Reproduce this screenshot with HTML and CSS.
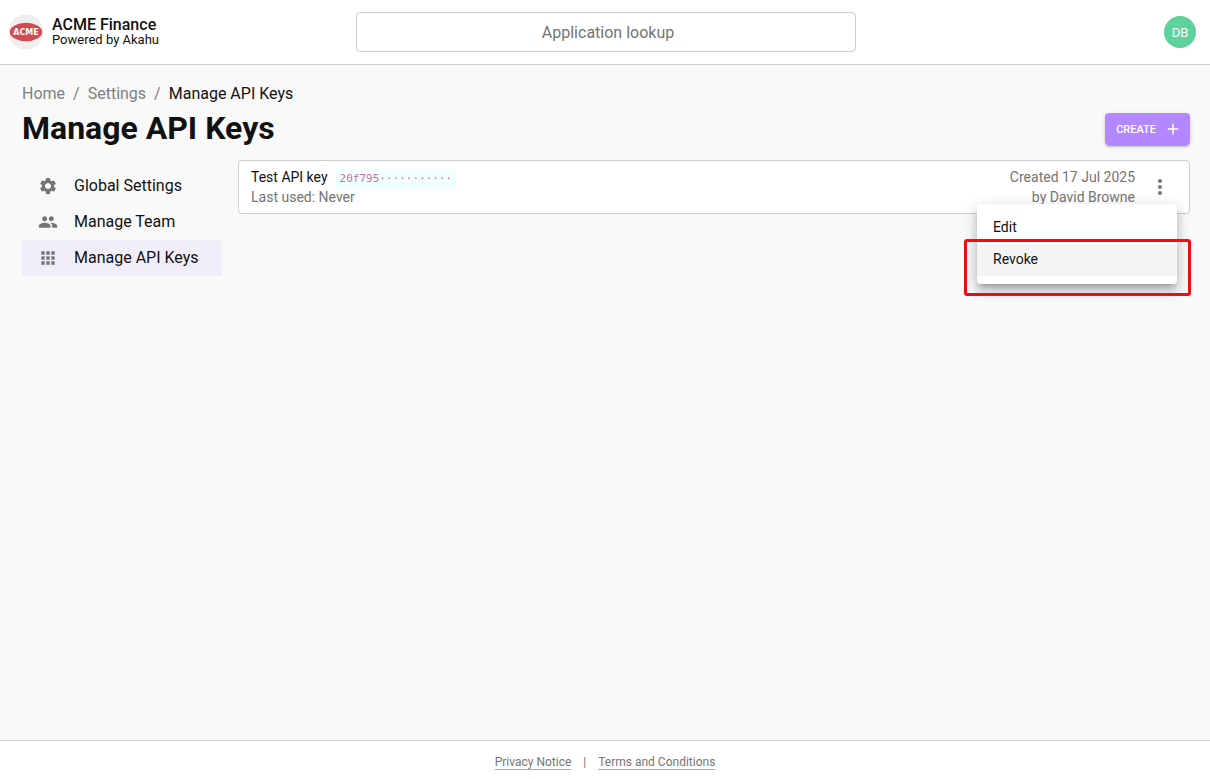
FILE: index.html
```html
<!DOCTYPE html>
<html lang="en">

<head>
    <meta charset="UTF-8">
    <meta name="viewport" content="width=device-width, initial-scale=1.0">
    <title>Manage API Keys</title>
    <link rel="stylesheet" href="styles.css">
</head>

<body>
    <header class="header">
        <a class="brand" href="#">
            <svg class="brand-logo" viewBox="0 0 36 36" aria-hidden="true">
                <circle cx="18" cy="18" r="17.5" fill="#eeeeee" />
                <ellipse cx="18" cy="18" rx="16.2" ry="9.2" fill="#d04a50" />
                <text class="logo-text" x="18" y="21" text-anchor="middle">ACME</text>
            </svg>
            <span class="brand-text">
                <strong class="brand-name">ACME Finance</strong>
                <span class="brand-sub">Powered by Akahu</span>
            </span>
        </a>
        <input class="lookup" type="text" placeholder="Application lookup" aria-label="Application lookup">
        <button class="avatar" type="button" aria-label="Account">DB</button>
    </header>

    <main class="main">
        <nav class="breadcrumbs" aria-label="Breadcrumb">
            <a href="#">Home</a>
            <span>/</span>
            <a href="#">Settings</a>
            <span>/</span>
            <a class="current" href="#" aria-current="page">Manage API Keys</a>
        </nav>
        <div class="title-row">
            <h1>Manage API Keys</h1>
            <button class="create" type="button">
                CREATE
                <svg viewBox="0 0 24 24" width="18" height="18" aria-hidden="true">
                    <path d="M19 13h-6v6h-2v-6H5v-2h6V5h2v6h6v2z" />
                </svg>
            </button>
        </div>

        <div class="content">
            <nav class="sidebar" aria-label="Settings">
                <a href="#">
                    <svg viewBox="0 0 24 24" aria-hidden="true">
                        <path d="M19.14 12.94c.04-.3.06-.61.06-.94 0-.32-.02-.64-.07-.94l2.03-1.58c.18-.14.23-.41.12-.61l-1.92-3.32c-.12-.22-.37-.29-.59-.22l-2.39.96c-.5-.38-1.03-.7-1.62-.94l-.36-2.54c-.04-.24-.24-.41-.48-.41h-3.84c-.24 0-.43.17-.47.41l-.36 2.54c-.59.24-1.13.57-1.62.94l-2.39-.96c-.22-.08-.47 0-.59.22L2.74 8.87c-.12.21-.08.47.12.61l2.03 1.58c-.05.3-.09.63-.09.94s.02.64.07.94l-2.03 1.58c-.18.14-.23.41-.12.61l1.92 3.32c.12.22.37.29.59.22l2.39-.96c.5.38 1.03.7 1.62.94l.36 2.54c.05.24.24.41.48.41h3.84c.24 0 .44-.17.47-.41l.36-2.54c.59-.24 1.13-.56 1.62-.94l2.39.96c.22.08.47 0 .59-.22l1.92-3.32c.12-.22.07-.47-.12-.61l-2.01-1.58zM12 15.6c-1.98 0-3.6-1.62-3.6-3.6s1.62-3.6 3.6-3.6 3.6 1.62 3.6 3.6-1.62 3.6-3.6 3.6z" />
                    </svg>
                    Global Settings
                </a>
                <a href="#">
                    <svg viewBox="0 0 24 24" aria-hidden="true">
                        <path d="M16 11c1.66 0 2.99-1.34 2.99-3S17.66 5 16 5c-1.66 0-3 1.34-3 3s1.34 3 3 3zm-8 0c1.66 0 2.99-1.34 2.99-3S9.66 5 8 5C6.34 5 5 6.34 5 8s1.34 3 3 3zm0 2c-2.33 0-7 1.17-7 3.5V19h14v-2.5c0-2.33-4.67-3.5-7-3.5zm8 0c-.29 0-.62.02-.97.05 1.16.84 1.97 1.97 1.97 3.45V19h6v-2.5c0-2.33-4.67-3.5-7-3.5z" />
                    </svg>
                    Manage Team
                </a>
                <a class="selected" href="#">
                    <svg viewBox="0 0 24 24" aria-hidden="true">
                        <path d="M4 8h4V4H4v4zm6 12h4v-4h-4v4zm-6 0h4v-4H4v4zm0-6h4v-4H4v4zm6 0h4v-4h-4v4zm6-10v4h4V4h-4zm-6 4h4V4h-4v4zm6 6h4v-4h-4v4zm0 6h4v-4h-4v4z" />
                    </svg>
                    Manage API Keys
                </a>
            </nav>

            <section class="key-card">
                <div class="key-info">
                    <div class="key-name">Test API key <code>20f795···········</code></div>
                    <div>Last used: Never</div>
                </div>
                <div class="key-created">
                    <div>Created 17 Jul 2025</div>
                    <div>by David Browne</div>
                </div>
                <button class="more" type="button" aria-label="More options" aria-expanded="true">
                    <svg viewBox="0 0 24 24" width="24" height="24" aria-hidden="true">
                        <path d="M12 8c1.1 0 2-.9 2-2s-.9-2-2-2-2 .9-2 2 .9 2 2 2zm0 2c-1.1 0-2 .9-2 2s.9 2 2 2 2-.9 2-2-.9-2-2-2zm0 6c-1.1 0-2 .9-2 2s.9 2 2 2 2-.9 2-2-.9-2-2-2z" />
                    </svg>
                </button>
                <div class="menu">
                    <button type="button">Edit</button>
                    <button class="hovered" type="button">Revoke</button>
                    <div class="callout"></div>
                </div>
            </section>
        </div>
    </main>

    <footer class="footer">
        <a href="#">Privacy Notice</a>
        <span>|</span>
        <a href="#">Terms and Conditions</a>
    </footer>
</body>

</html>
```
FILE: styles.css
```css
* {
    box-sizing: border-box;
}

body {
    display: flex;
    flex-direction: column;
    min-height: 100vh;
    margin: 0;
    background: #f9f9f9;
    color: #111;
    font-family: Roboto, "Liberation Sans", sans-serif;
    font-size: 16px;
    line-height: 24px;
}

a {
    color: inherit;
    text-decoration: none;
}

button {
    padding: 0;
    border: 0;
    font-family: inherit;
    cursor: pointer;
}

svg {
    flex-shrink: 0;
}

.header {
    display: grid;
    grid-template-columns: 1fr minmax(0, 500px) 1fr;
    align-items: center;
    height: 65px;
    padding: 0 6px 0 8px;
    border-bottom: 1px solid #ccc;
    background: #fff;
}

.brand {
    display: flex;
    align-items: center;
    gap: 8px;
}

.brand-logo {
    width: 36px;
    height: 36px;
}

.logo-text {
    fill: #fff;
    font-family: "DejaVu Sans", sans-serif;
    font-size: 8px;
    font-weight: bold;
}

.brand-text {
    display: flex;
    flex-direction: column;
}

.brand-name {
    font-weight: 500;
    line-height: 16px;
}

.brand-sub {
    font-size: 13px;
    line-height: 14px;
}

.lookup {
    width: 100%;
    height: 40px;
    padding: 0 12px 0 16px;
    border: 1px solid #ccc;
    border-radius: 4px;
    background: #fff;
    font: inherit;
    text-align: center;
}

.lookup::placeholder {
    color: #757575;
}

.avatar {
    justify-self: end;
    width: 32px;
    height: 32px;
    margin-right: 8px;
    border-radius: 50%;
    background: #5dd39a;
    color: #fff;
    font-size: 13px;
}

.main {
    flex: 1;
    padding: 17px 20px 16px 22px;
}

.breadcrumbs {
    display: flex;
    gap: 8px;
    color: #808080;
}

.breadcrumbs .current {
    color: #111;
}

.title-row {
    display: flex;
    align-items: center;
    justify-content: space-between;
    height: 46px;
}

h1 {
    margin: 0 0 2px;
    font-size: 32px;
    line-height: 40px;
}

.create {
    display: flex;
    align-items: center;
    gap: 8px;
    height: 32px;
    padding: 0 8px 0 11px;
    border-radius: 4px;
    background: #b388ff;
    box-shadow: 0 3px 1px -2px rgba(0, 0, 0, 0.2), 0 2px 2px rgba(0, 0, 0, 0.14), 0 1px 5px rgba(0, 0, 0, 0.12);
    color: #fff;
    font-size: 11px;
    font-weight: 500;
}

.create svg {
    fill: #fff;
}

.content {
    display: flex;
    align-items: flex-start;
    gap: 16px;
    padding-top: 8px;
}

.sidebar {
    flex: 0 0 200px;
    padding-top: 8px;
}

.sidebar a {
    display: flex;
    align-items: center;
    gap: 16px;
    height: 36px;
    padding: 0 16px;
}

.sidebar svg {
    width: 20px;
    height: 20px;
    fill: #757575;
}

.sidebar .selected {
    background: #f2eef9;
}

.key-card {
    position: relative;
    display: flex;
    flex: 1;
    align-items: center;
    padding: 6px 12px;
    border: 1px solid #ccc;
    border-radius: 4px;
    background: #fff;
    color: #757575;
    font-size: 14px;
    line-height: 20px;
}

.key-info {
    flex: 1;
}

.key-name {
    display: flex;
    align-items: baseline;
    gap: 8px;
    height: 20px;
    color: #111;
}

.key-name code {
    padding: 0 4px;
    background: #f0ffff;
    color: #d0709c;
    font-family: "DejaVu Sans Mono", monospace;
    font-size: 11px;
}

.key-created {
    text-align: right;
}

.more {
    display: flex;
    margin: 0 5px 0 13px;
    background: none;
}

.more svg {
    fill: #757575;
}

.menu {
    position: absolute;
    top: 43px;
    right: 12px;
    width: 200px;
    padding: 8px 0;
    border-radius: 4px;
    background: #fff;
    box-shadow: 0 5px 5px -3px rgba(0, 0, 0, 0.2), 0 8px 10px 1px rgba(0, 0, 0, 0.14), 0 3px 14px 2px rgba(0, 0, 0, 0.12);
}

.menu button {
    display: block;
    width: 100%;
    height: 32px;
    padding: 0 16px 2px;
    background: none;
    color: #111;
    font-size: 14px;
    text-align: left;
}

.menu .hovered {
    background: #f5f5f5;
}

/* red frame round the Revoke item */
.callout {
    position: absolute;
    top: 35px;
    right: -14px;
    bottom: -12px;
    left: -13px;
    border: 3px solid #f40b10;
    border-radius: 3px;
    pointer-events: none;
}

.footer {
    display: flex;
    align-items: center;
    justify-content: center;
    gap: 12px;
    height: 39px;
    padding-top: 4px;
    border-top: 1px solid #ccc;
    background: #fff;
    color: #757575;
    font-size: 12px;
    line-height: 14px;
}

.footer a {
    border-bottom: 1px solid #aaa;
}
```
